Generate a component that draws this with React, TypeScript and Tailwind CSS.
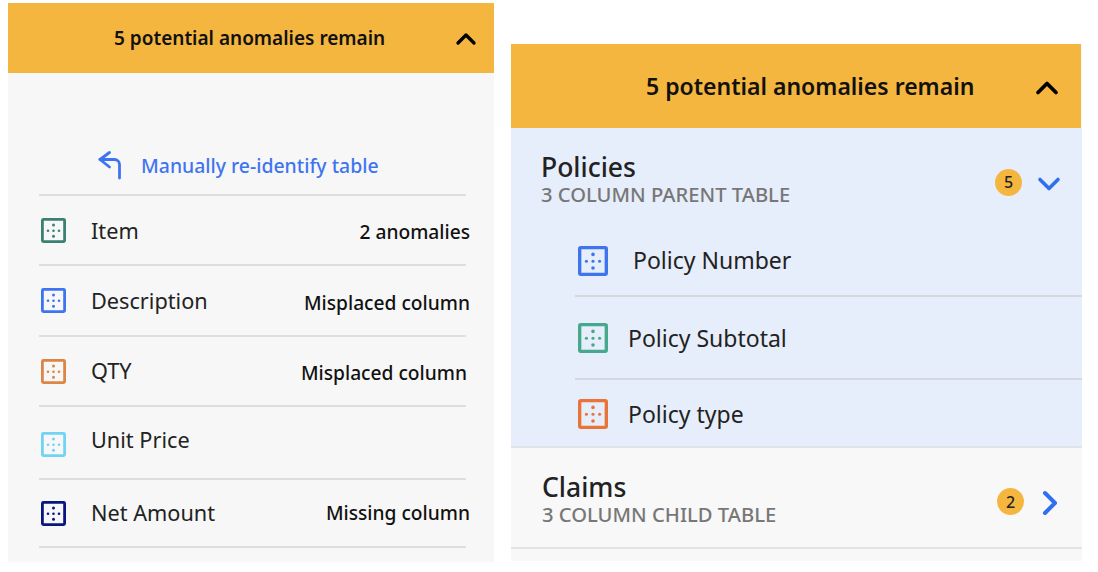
import { ChevronDown, ChevronRight, ChevronUp } from "lucide-react";

function ColumnIcon({ color, className }: { color: string; className: string }) {
  return (
    <svg viewBox="0 0 25 25" className={className} fill="none">
      <rect x="1.4" y="1.4" width="22.2" height="22.2" rx="1" stroke={color} strokeWidth="2.8" />
      <g fill={color}>
        <circle cx="12.5" cy="7" r="1.5" />
        <circle cx="7" cy="12.7" r="1.3" />
        <circle cx="12.5" cy="12.7" r="1.3" />
        <circle cx="18" cy="12.7" r="1.3" />
        <circle cx="12.5" cy="18.3" r="1.5" />
      </g>
    </svg>
  );
}

function ReturnArrow() {
  return (
    <svg viewBox="0 0 24 29" className="h-[29px] w-[24px] shrink-0" fill="none" stroke="#3f74f0" strokeWidth="2.8" strokeLinecap="round" strokeLinejoin="round">
      <path d="M11.5 1.5 2 8.5l9.5 7.5" />
      <path d="M2 8.5h14.5a5 5 0 0 1 5 5V27" />
    </svg>
  );
}

function AnomalyBar({ className, textClass, iconClass }: { className: string; textClass: string; iconClass: string }) {
  return (
    <div className={`flex items-center bg-[#f4b63f] ${className}`}>
      <span className={`font-semibold text-[#111] ${textClass}`}>5 potential anomalies remain</span>
      <ChevronUp className={`ml-auto text-black ${iconClass}`} strokeWidth={2.5} />
    </div>
  );
}

const leftRows = [
  { name: "Item", color: "#3b8070", note: "2 anomalies", height: "h-[70px]", noteClass: "-mr-[4px] mt-[4px]", iconClass: "", nameClass: "mt-[3px]" },
  { name: "Description", color: "#3f74f0", note: "Misplaced column", height: "h-[71px]", noteClass: "-mr-[4px] mt-[5px]", iconClass: "", nameClass: "mt-[1px]" },
  { name: "QTY", color: "#dd8544", note: "Misplaced column", height: "h-[70px]", noteClass: "-mr-[1px] mt-[4px]", iconClass: "", nameClass: "mt-[1px]" },
  { name: "Unit Price", color: "#71d4f5", note: "", height: "h-[73px]", noteClass: "", iconClass: "mt-[3px]", nameClass: "-mt-[4px]" },
  { name: "Net Amount", color: "#0a1580", note: "Missing column", height: "h-[68px]", noteClass: "-mr-[4px]", iconClass: "", nameClass: "mt-[1px]" },
];

const policyRows = [
  { name: "Policy Number", color: "#3f74f0", height: "h-[71px]", nameClass: "ml-[25px]" },
  { name: "Policy Subtotal", color: "#46a88d", height: "h-[83px]", nameClass: "ml-[20px] mt-[2px]" },
  { name: "Policy type", color: "#e8743a", height: "h-[68px]", nameClass: "ml-[20px]" },
];

function CountBadge({ value, className }: { value: number; className?: string }) {
  return (
    <span className={`flex h-[27px] w-[27px] items-center justify-center rounded-full bg-[#f4b63f] text-[16px] font-medium text-[#222] ${className ?? ""}`}>
      {value}
    </span>
  );
}

export default function App() {
  return (
    <div className="flex h-[572px] w-[1098px] items-start overflow-hidden bg-white font-['Noto_Sans','Open_Sans',sans-serif]">
      {/* Left panel */}
      <section className="ml-2 mt-[3px] h-[559px] w-[486px] bg-[#f7f7f7]">
        <AnomalyBar className="h-[70px] pl-[106px] pr-[12px]" textClass="text-[19px]" iconClass="h-[32px] w-[32px] mt-[2px]" />
        <div className="pl-[31px] pr-[28px]">
          <div className="flex h-[123px] items-end gap-[19px] border-b-2 border-[#dedede] pb-[14px] pl-[59px]">
            <ReturnArrow />
            <span className="text-[19.4px] font-medium text-[#3f74f0]">Manually re-identify table</span>
          </div>
          {leftRows.map((row) => (
            <div key={row.name} className={`flex items-center border-b-2 border-[#dedede] ${row.height}`}>
              <ColumnIcon color={row.color} className={`ml-[2px] h-[25px] w-[25px] shrink-0 ${row.iconClass}`} />
              <span className={`ml-[25px] text-[21.7px] text-[#222] ${row.nameClass}`}>{row.name}</span>
              {row.note && (
                <span className={`ml-auto text-[19.2px] font-medium text-[#111] ${row.noteClass}`}>
                  {row.note}
                </span>
              )}
            </div>
          ))}
        </div>
      </section>

      {/* Right panel */}
      <section className="ml-[17px] mt-[44px] h-[517px] w-[571px] bg-[#f8f8f8]">
        <AnomalyBar className="mr-[1px] h-[84px] pl-[135px] pr-[16px]" textClass="text-[23px]" iconClass="h-[36px] w-[36px] mt-[3px]" />
        <div className="h-[320px] border-b-2 border-[#dfe3ea] bg-[#e6eefb]">
          <div className="flex h-[98px] items-start pl-[30px] pr-[15px] pt-[21px]">
            <div>
              <p className="text-[26.5px] font-medium leading-[36px] text-[#222]">Policies</p>
              <p className="text-[20.2px] font-medium leading-[18px] text-[#777]">3 COLUMN PARENT TABLE</p>
            </div>
            <div className="ml-auto mt-[17px] flex items-center gap-[9px]">
              <CountBadge value={5} className="mb-[4px]" />
              <ChevronDown className="h-[36px] w-[36px] text-[#2f6ff0]" strokeWidth={2.4} />
            </div>
          </div>
          <div className="ml-[64px]">
            {policyRows.map((row, i) => (
              <div key={row.name} className={`flex items-center ${row.height} ${i < 2 ? "border-b-2 border-[#d5d8de]" : ""}`}>
                <ColumnIcon color={row.color} className="ml-[3px] h-[30px] w-[30px] shrink-0" />
                <span className={`text-[23px] text-[#222] ${row.nameClass}`}>{row.name}</span>
              </div>
            ))}
          </div>
        </div>
        <div className="flex h-[101px] items-center border-b-2 border-[#e4e4e4] pl-[31px] pr-[12px]">
          <div className="mb-[4px]">
            <p className="text-[26.5px] font-medium leading-[36px] text-[#222]">Claims</p>
            <p className="text-[20.2px] font-medium leading-[18px] text-[#777]">3 COLUMN CHILD TABLE</p>
          </div>
          <div className="ml-auto mt-[10px] flex items-center gap-[6px]">
            <CountBadge value={2} className="mb-[2px]" />
            <ChevronRight className="h-[40px] w-[40px] text-[#2f6ff0]" strokeWidth={2.4} />
          </div>
        </div>
      </section>
    </div>
  );
}
